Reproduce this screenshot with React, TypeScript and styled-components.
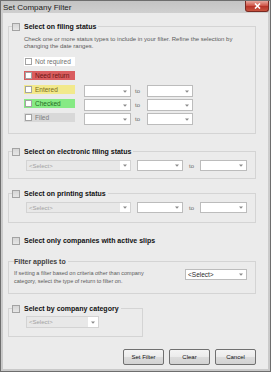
import styled, { createGlobalStyle } from "styled-components";

const GlobalStyle = createGlobalStyle`
  html, body { margin:0; padding:0; }
  body { font-family:"Liberation Sans", Arial, sans-serif; background:#ebebeb; }
`;

const Window = styled.div`
  width:271px;
  height:372px;
  box-sizing:border-box;
  display:flex;
  flex-direction:column;
  border:1px solid #6e6e6e;
  padding:0 2px 2px;
  background:linear-gradient(#c4c4c4, #cfcfcf 12px, #c9c9c9);
`;

const TitleBar = styled.div`
  height:12px;
  display:flex;
  align-items:flex-start;
  justify-content:space-between;
  flex-shrink:0;
`;

const TitleText = styled.span`
  font-size:8px;
  line-height:13px;
  color:#1c1c1c;
`;

const CloseButton = styled.div`
  width:24px;
  height:11px;
  margin-right:-1px;
  box-sizing:border-box;
  display:flex;
  align-items:center;
  justify-content:center;
  border:1px solid #7a2a22;
  border-top:none;
  border-radius:0 0 3px 3px;
  background:linear-gradient(#e8a99f, #d0584b 45%, #b8352a 55%, #c9543f);
`;

const Content = styled.div`
  flex:1;
  display:flex;
  flex-direction:column;
  padding:9px 12px 0 5px;
  background:#ebebeb;
`;

const Group = styled.fieldset<{ $top?: number; $width?: number }>`
  margin:${(p) => p.$top ?? 0}px 0 0;
  padding:0;
  min-width:0;
  width:${(p) => (p.$width ? `${p.$width}px` : "auto")};
  box-sizing:border-box;
  border:1px solid #d4d4d4;
`;

const Legend = styled.legend<{ $indent: number; $plain?: boolean }>`
  margin-left:${(p) => p.$indent}px;
  padding:0 2px 0 0;
  height:9px;
  display:flex;
  align-items:center;
  gap:4px;
  font-size:7px;
  font-weight:bold;
  color:${(p) => (p.$plain ? "#404040" : "#111")};
`;

const Body = styled.div<{ $pad: string }>`
  padding:${(p) => p.$pad};
`;

const Note = styled.p<{ $size: number; $line: number }>`
  margin:0;
  font-size:${(p) => p.$size}px;
  line-height:${(p) => p.$line}px;
  color:#5a5a5a;
`;

const StatusList = styled.div`
  margin-top:7px;
  display:flex;
  flex-direction:column;
  gap:2px;
`;

const Row = styled.div`
  height:12px;
  display:flex;
  align-items:flex-start;
`;

const StatusTag = styled.div<{ $bg: string; $fg: string }>`
  width:51px;
  height:9px;
  box-sizing:border-box;
  padding-left:1px;
  margin-right:9px;
  display:flex;
  align-items:center;
  gap:3px;
  background:${(p) => p.$bg};
  color:${(p) => p.$fg};
  font-size:6.5px;
`;

const Check = styled.span<{ $size: number; $fill: string }>`
  width:${(p) => p.$size}px;
  height:${(p) => p.$size}px;
  box-sizing:border-box;
  flex-shrink:0;
  border:1px solid #a3a3a3;
  background:${(p) => p.$fill};
`;

const Combo = styled.div<{ $w: number; $off?: boolean; $h?: number }>`
  width:${(p) => p.$w}px;
  height:${(p) => p.$h ?? 12}px;
  box-sizing:border-box;
  display:flex;
  border:1px solid ${(p) => (p.$off ? "#d3d3d3" : "#bcbcbc")};
  background:#fff;
`;

const ComboField = styled.span<{ $off?: boolean }>`
  flex:1;
  display:flex;
  align-items:center;
  padding-left:2px;
  font-size:${(p) => (p.$off ? 6 : 6.5)}px;
  color:${(p) => (p.$off ? "#a2a2a2" : "#2a2a2a")};
  background:${(p) => (p.$off ? "#e8e8e8" : "#fff")};
`;

const ComboArrow = styled.span`
  width:10px;
  display:flex;
  align-items:center;
  justify-content:center;
`;

const ToLabel = styled.span<{ $w: number; $pad: number }>`
  width:${(p) => p.$w}px;
  box-sizing:border-box;
  padding-left:${(p) => p.$pad}px;
  font-size:6px;
  line-height:12px;
  color:#6a6a6a;
`;

const Gap = styled.span<{ $w: number }>`
  width:${(p) => p.$w}px;
  flex-shrink:0;
`;

const SlipRow = styled.div`
  margin:13px 0 0 4px;
  height:9px;
  display:flex;
  align-items:center;
  gap:4px;
  font-size:7px;
  font-weight:bold;
  color:#111;
`;

const ApplyBody = styled.div`
  padding:3px 8px 8px 5px;
  display:flex;
  align-items:flex-start;
  justify-content:space-between;
`;

const ApplyNote = styled(Note)`
  width:152px;
`;

const ButtonRow = styled.div`
  margin-top:12px;
  display:flex;
  justify-content:flex-end;
  gap:5px;
`;

const Button = styled.button`
  width:41px;
  height:16px;
  padding:0;
  box-sizing:border-box;
  border:1px solid #707070;
  border-radius:2px;
  background:linear-gradient(#f4f4f4, #ebebeb 50%, #dcdcdc 51%, #d2d2d2);
  font-family:inherit;
  font-size:6px;
  color:#111;
`;

const Arrow = () => (
  <svg width="4" height="3" viewBox="0 0 4 3">
    <path d="M0 0.5 L4 0.5 L2 2.8 Z" fill="#8a8a8a" />
  </svg>
);

function Select({ w, off, text, h }: { w: number; off?: boolean; text?: string; h?: number }) {
  return (
    <Combo $w={w} $off={off} $h={h}>
      <ComboField $off={off}>{text}</ComboField>
      <ComboArrow>
        <Arrow />
      </ComboArrow>
    </Combo>
  );
}

const statuses = [
  { label: "Not required", bg: "#ffffff", fg: "#6e6e6e", dates: false },
  { label: "Need return", bg: "#d95d5f", fg: "#6a1414", dates: false },
  { label: "Entered", bg: "#f2e98c", fg: "#7a6b1a", dates: true },
  { label: "Checked", bg: "#86ea84", fg: "#236b23", dates: true },
  { label: "Filed", bg: "#d8d8d8", fg: "#7c7c7c", dates: true },
];

const HeadCheck = () => <Check $size={8} $fill="linear-gradient(#d6d6d6, #e6e6e6)" />;

function App() {
  return (
    <>
      <GlobalStyle />
      <Window>
        <TitleBar>
          <TitleText>Set Company Filter</TitleText>
          <CloseButton>
            <svg width="7" height="6" viewBox="0 0 7 6">
              <path d="M1 0.5 L6 5.5 M6 0.5 L1 5.5" stroke="#fff" strokeWidth="1.6" />
            </svg>
          </CloseButton>
        </TitleBar>
        <Content>
          <Group>
            <Legend $indent={3}>
              <HeadCheck />
              Select on filing status
            </Legend>
            <Body $pad="5px 0 8px 15px">
              <Note $size={6} $line={7}>
                Check one or more status types to include in your filter. Refine the selection by
                changing the date ranges.
              </Note>
              <StatusList>
                {statuses.map((s) => (
                  <Row key={s.label}>
                    <StatusTag $bg={s.bg} $fg={s.fg}>
                      <Check $size={7} $fill="#fff" />
                      {s.label}
                    </StatusTag>
                    {s.dates && (
                      <>
                        <Select w={47} />
                        <ToLabel $w={16} $pad={4}>to</ToLabel>
                        <Select w={46} />
                      </>
                    )}
                  </Row>
                ))}
              </StatusList>
            </Body>
          </Group>

          <Group $top={13}>
            <Legend $indent={3}>
              <HeadCheck />
              Select on electronic filing status
            </Legend>
            <Body $pad="4px 0 6px 17px">
              <Row>
                <Select w={105} off text="<Select>" h={11} />
                <Gap $w={6} />
                <Select w={46} h={11} />
                <ToLabel $w={17} $pad={6}>to</ToLabel>
                <Select w={47} h={11} />
              </Row>
            </Body>
          </Group>

          <Group $top={10}>
            <Legend $indent={3}>
              <HeadCheck />
              Select on printing status
            </Legend>
            <Body $pad="4px 0 8px 17px">
              <Row>
                <Select w={105} off text="<Select>" h={11} />
                <Gap $w={6} />
                <Select w={46} h={11} />
                <ToLabel $w={17} $pad={6}>to</ToLabel>
                <Select w={47} h={11} />
              </Row>
            </Body>
          </Group>

          <SlipRow>
            <HeadCheck />
            Select only companies with active slips
          </SlipRow>

          <Group $top={12}>
            <Legend $indent={5} $plain>
              Filter applies to
            </Legend>
            <ApplyBody>
              <ApplyNote $size={5.5} $line={8}>
                If setting a filter based on criteria other than company category, select the type
                of return to filter on.
              </ApplyNote>
              <Select w={62} text="<Select>" h={11} />
            </ApplyBody>
          </Group>

          <Group $top={10} $width={135}>
            <Legend $indent={3}>
              <HeadCheck />
              Select by company category
            </Legend>
            <Body $pad="3px 0 8px 17px">
              <Select w={73} off text="<Select>" />
            </Body>
          </Group>

          <ButtonRow>
            <Button>Set Filter</Button>
            <Button>Clear</Button>
            <Button>Cancel</Button>
          </ButtonRow>
        </Content>
      </Window>
    </>
  );
}

export default App;
